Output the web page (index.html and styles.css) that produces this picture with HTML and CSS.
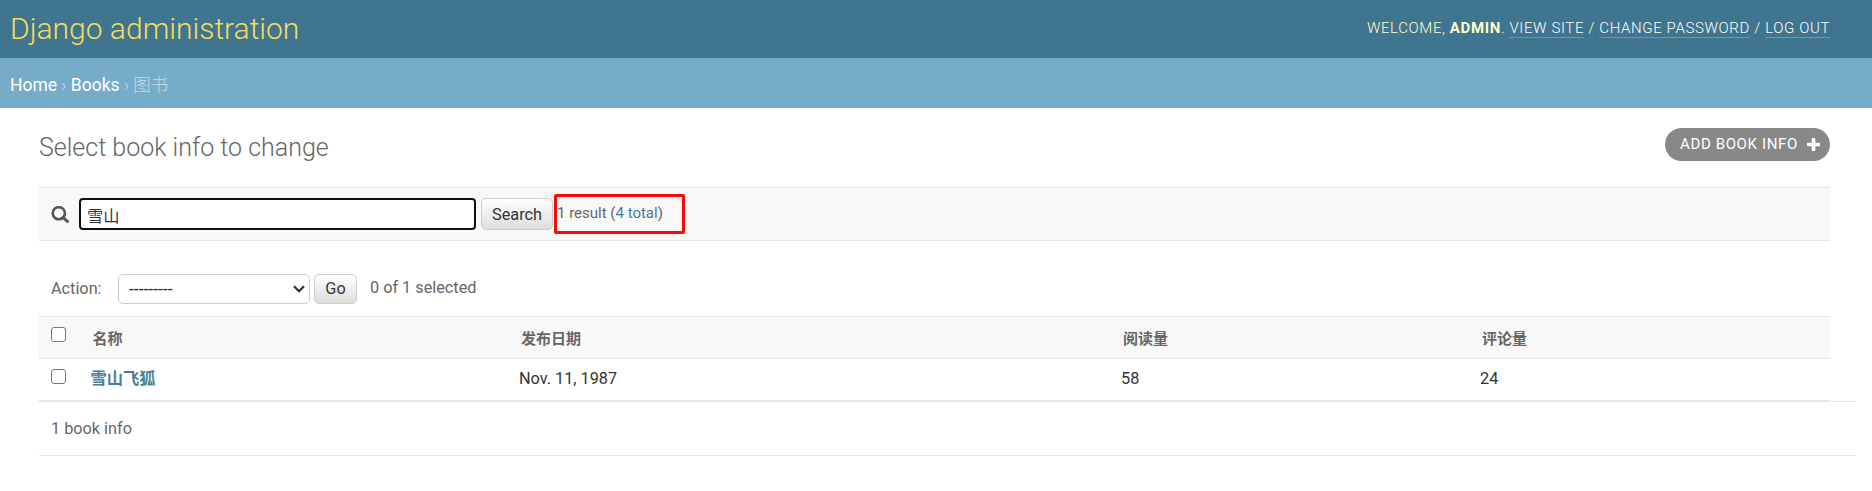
FILE: index.html
```html
<!DOCTYPE html>
<html lang="en">
<head>
<meta charset="utf-8">
<title>Select book info to change | Django site admin</title>
<link rel="stylesheet" href="styles.css">
</head>
<body>
<header class="header">
  <h1 class="site-name">Django administration</h1>
  <div class="user-tools">Welcome, <strong>admin</strong>. <a>View site</a> / <a>Change password</a> / <a>Log out</a></div>
</header>
<nav class="breadcrumbs"><a>Home</a> › <a>Books</a> › 图书</nav>
<main class="content">
  <div class="title-row">
    <h2 class="title">Select book info to change</h2>
    <a class="add-link"><span>Add book info</span><svg class="plus" viewBox="0 0 13 13"><path d="M4.7 0.7Q4.7 0 5.4 0H7.6Q8.3 0 8.3 .7V4.7H12.3Q13 4.7 13 5.4V7.6Q13 8.3 12.3 8.3H8.3V12.3Q8.3 13 7.6 13H5.4Q4.7 13 4.7 12.3V8.3H.7Q0 8.3 0 7.6V5.4Q0 4.7 .7 4.7H4.7Z" fill="#fff"/></svg></a>
  </div>
  <div class="toolbar">
    <svg class="search-icon" viewBox="0 0 18 17"><circle cx="7.8" cy="7.2" r="6.1" fill="none" stroke="#555" stroke-width="2.6"/><path d="M12.3 11.6L16.5 15.5" stroke="#555" stroke-width="2.9" stroke-linecap="round"/></svg>
    <input class="search-input" type="text" value="雪山">
    <button class="button search-button">Search</button>
    <div class="result-count"><span>1 result (<a>4 total</a>)</span></div>
  </div>
  <div class="actions">
    <span class="action-label">Action:</span>
    <div class="select"><span>---------</span><svg class="chevron" viewBox="0 0 12 8"><path d="M1 1.2L6 6.2L11 1.2" fill="none" stroke="#333" stroke-width="2.3"/></svg></div>
    <button class="button go-button">Go</button>
    <span class="counter">0 of 1 selected</span>
  </div>
  <div class="results">
    <div class="row head"><i class="checkbox"></i><span>名称</span><span>发布日期</span><span>阅读量</span><span>评论量</span></div>
    <div class="row"><i class="checkbox"></i><a class="book">雪山飞狐</a><span>Nov. 11, 1987</span><span>58</span><span>24</span></div>
  </div>
  <div class="paginator">1 book info</div>
</main>
</body>
</html>
```
FILE: styles.css
```css
* { box-sizing: border-box; }
body {
  margin: 0;
  background: #fff;
  color: #333;
  font: 16.25px/20px Roboto, "Noto Sans CJK SC", sans-serif;
}
.header {
  display: flex;
  justify-content: space-between;
  height: 58px;
  padding: 0 42px 0 10px;
  background: #3f758f;
  color: #ffc;
}
.site-name {
  margin: 0;
  color: #f5dd5d;
  font-size: 30px;
  font-weight: 300;
  line-height: 58px;
}
.user-tools {
  padding-top: 18px;
  font-size: 15px;
  font-weight: 300;
  line-height: 20px;
  letter-spacing: 0.625px;
  text-transform: uppercase;
}
.user-tools strong { font-weight: 700; }
.user-tools a { color: #fff; border-bottom: 1px solid rgba(255, 255, 255, .25); }
.breadcrumbs {
  height: 50px;
  padding: 0 10px;
  background: #76acc8;
  color: #c4dce8;
  font-size: 17.5px;
  font-weight: 300;
  line-height: 54px;
}
.breadcrumbs a { color: #fff; font-weight: 400; }
.content { padding: 20px 42px 0 39px; }
.title-row { display: flex; justify-content: space-between; height: 59px; }
.title {
  margin: 5px 0 0;
  color: #666;
  font-size: 25px;
  font-weight: 300;
  line-height: 30px;
}
.add-link {
  display: flex;
  align-items: center;
  justify-content: space-between;
  width: 165px;
  height: 33px;
  padding: 0 10px 2px 15px;
  border-radius: 17px;
  background: #888;
  color: #fff;
  font-size: 15px;
  letter-spacing: .625px;
  text-transform: uppercase;
}
.plus { width: 13px; height: 13px; margin-top: 2px; }
.toolbar {
  display: flex;
  height: 54px;
  padding: 10px 12px;
  border-top: 1px solid #e6e6e6;
  border-bottom: 1px solid #e6e6e6;
  background: #f8f8f8;
}
.search-icon { width: 18px; height: 17px; margin: 8px 10px 0 0; }
.search-input {
  width: 397px;
  height: 32px;
  padding: 1px 6px 0;
  border: 2px solid #101010;
  border-radius: 4px;
  outline: none;
  background: #fff;
  color: #333;
  font: inherit;
}
.button {
  height: 32px;
  padding: 0;
  border: 1px solid #ccc;
  border-radius: 5px;
  background: linear-gradient(#fff, #ddd);
  color: #333;
  font: inherit;
}
.search-button { width: 72px; margin-left: 5px; padding-top: 1px; }
.result-count {
  width: 131px;
  height: 40px;
  margin: -4px 0 0 1px;
  padding: 7px 0 0;
  border: 3px solid #f80808;
  border-radius: 2px;
  color: #666;
  font-size: 15px;
  line-height: 18px;
}
.result-count a { color: #447e9b; }
.actions {
  display: flex;
  height: 75px;
  padding: 33px 12px 0;
  color: #666;
}
.action-label { width: 67px; line-height: 29px; }
.select {
  display: flex;
  align-items: center;
  justify-content: space-between;
  width: 192px;
  height: 30px;
  padding: 0 4px 0 10px;
  border: 1px solid #ccc;
  border-radius: 5px;
  color: #333;
  font-size: 17.5px;
}
.chevron { width: 12px; height: 8px; }
.go-button { width: 43px; height: 30px; margin: 0 13px 0 4px; }
.counter { line-height: 27px; }
.results { border-top: 1px solid #e6e6e6; }
.row {
  display: grid;
  grid-template-columns: 39.5px 428.5px 602px 359px 1fr;
  height: 42px;
  padding: 10px 0 0 12px;
  border-bottom: 1px solid #e6e6e6;
}
.head {
  background: #f8f8f8;
  color: #666;
  font-size: 15px;
  font-weight: 700;
  line-height: 24px;
}
.head span { padding-left: 2px; }
.checkbox {
  width: 15px;
  height: 15px;
  border: 1px solid #767676;
  border-radius: 3px;
  background: #fff;
}
.book { color: #447e9b; font-weight: 700; }
.paginator {
  width: 1816px;
  height: 55px;
  padding: 17px 12px;
  border-top: 1px solid #e6e6e6;
  border-bottom: 1px solid #e6e6e6;
  color: #666;
}
```
